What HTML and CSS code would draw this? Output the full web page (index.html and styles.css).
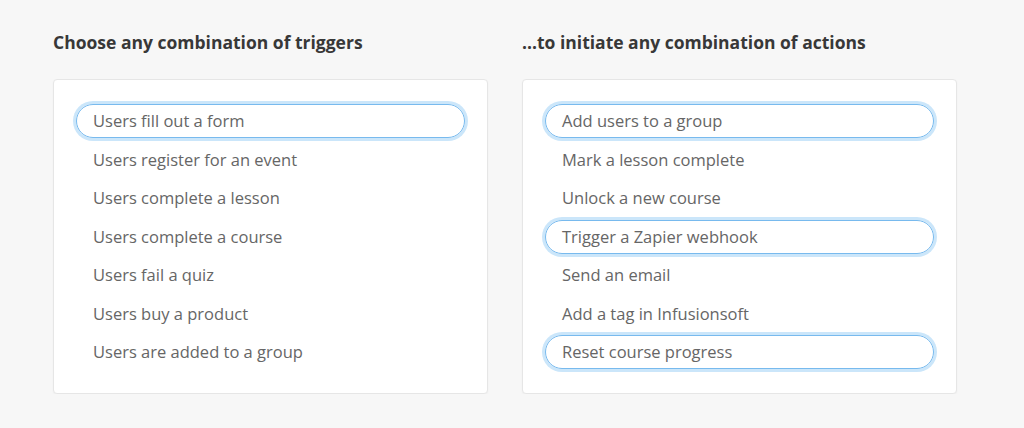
FILE: index.html
```html
<!DOCTYPE html>
<html>
<head>
<meta charset="utf-8">
<link rel="stylesheet" href="styles.css">
</head>
<body>
<div class="wrap">
  <section class="col">
    <h2 class="title">Choose any combination of triggers</h2>
    <ul class="panel">
      <li class="item on">Users fill out a form</li>
      <li class="item">Users register for an event</li>
      <li class="item">Users complete a lesson</li>
      <li class="item">Users complete a course</li>
      <li class="item">Users fail a quiz</li>
      <li class="item">Users buy a product</li>
      <li class="item">Users are added to a group</li>
    </ul>
  </section>
  <section class="col">
    <h2 class="title">...to initiate any combination of actions</h2>
    <ul class="panel">
      <li class="item on">Add users to a group</li>
      <li class="item">Mark a lesson complete</li>
      <li class="item">Unlock a new course</li>
      <li class="item on">Trigger a Zapier webhook</li>
      <li class="item">Send an email</li>
      <li class="item">Add a tag in Infusionsoft</li>
      <li class="item on">Reset course progress</li>
    </ul>
  </section>
</div>
</body>
</html>
```
FILE: styles.css
```css
html, body {
  margin: 0;
  padding: 0;
  background: #f7f7f7;
  font-family: "Open Sans", "Noto Sans", sans-serif;
}
.wrap {
  display: flex;
  gap: 34px;
  padding: 30px 0 0 53px;
}
.col {
  width: 435px;
}
.title {
  margin: 0 0 24px 0;
  font-size: 17.5px;
  font-weight: 700;
  color: #383838;
  line-height: 25px;
}
.panel {
  list-style: none;
  margin: 0;
  padding: 24px 22px 24px 22px;
  background: #fff;
  border: 1px solid #e6e6e6;
  border-radius: 4px;
  box-shadow: 0 1px 2px rgba(0,0,0,0.04);
}
.item {
  height: 34px;
  line-height: 31px;
  padding: 0 16px;
  margin-bottom: 4.5px;
  font-size: 16.5px;
  color: #666;
  border: 1.5px solid transparent;
  border-radius: 20px;
  box-sizing: border-box;
}
.item:last-child { margin-bottom: 0; }
.item.on {
  border-color: #78baee;
  box-shadow: 0 0 0 3px rgba(140, 200, 245, 0.45);
}
```
